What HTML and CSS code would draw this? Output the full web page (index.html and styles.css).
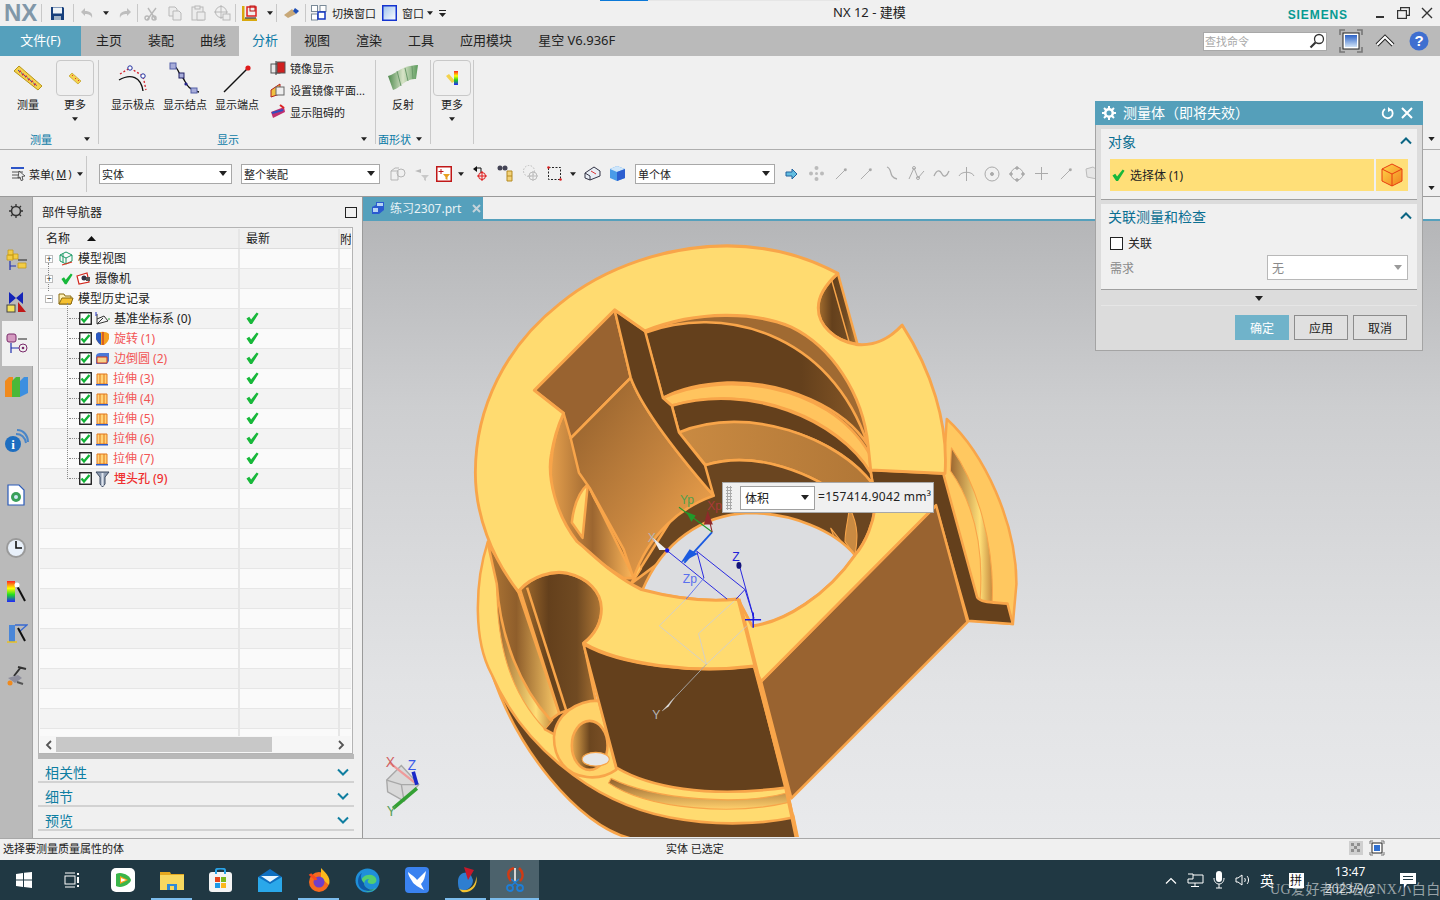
FILE: index.html
```html
<!DOCTYPE html>
<html lang="zh">
<head>
<meta charset="utf-8">
<title>NX 12 - 建模</title>
<link rel="stylesheet" href="styles.css">
</head>
<body>
<svg class="defs" width="0" height="0">
  <defs>
    <symbol id="ok" viewBox="0 0 14 14"><path d="M.5 7 L3.500 5 L5.500 8 L11.500 .5 L13.500 2 L6.500 13 L4.500 13 Z" fill="#17b83a"/></symbol>
    <symbol id="cb" viewBox="0 0 13 13"><rect x=".75" y=".75" width="11.5" height="11.5" fill="#fff" stroke="#111" stroke-width="1.3"/><path d="M2.5 6.5 L5 9.5 L10.5 3" fill="none" stroke="#12b436" stroke-width="2.4"/></symbol>
    <symbol id="ext" viewBox="0 0 14 14"><path d="M2 2 H12 V12 H2Z" fill="#ffd277" stroke="#e2761a"/><path d="M5 2V12M9 2V12" stroke="#e2761a"/><path d="M1 12 H13 V13.5 H1Z" fill="#2f5cc8"/></symbol>
    <symbol id="dn" viewBox="0 0 8 5"><path d="M0 0H8L4 5Z" fill="#222"/></symbol>
    <symbol id="chev" viewBox="0 0 12 8"><path d="M1 1.5 L6 6.5 L11 1.5" fill="none" stroke="#0f7ea0" stroke-width="2"/></symbol>
    <symbol id="chu" viewBox="0 0 12 8"><path d="M1 6.5 L6 1.5 L11 6.5" fill="none" stroke="#0b6583" stroke-width="2"/></symbol>
    <symbol id="ln" viewBox="0 0 16 16"><path d="M2 14 L13 3" stroke="#a9a9a9" fill="none"/><circle cx="12" cy="4" r="1.6" fill="#a9a9a9"/></symbol>
  </defs>
</svg>

<div class="app">
  <header class="titlebar">
    <div class="qat">
      <span class="nx">NX</span><i class="sep"></i>
      <span class="s w31"><svg width="15" height="15" viewBox="0 0 15 15"><path d="M1 1H13L14 2V14H1Z" fill="#173f7c"/><rect x="3" y="1.5" width="9" height="6" fill="#eef3f7"/><rect x="4" y="10" width="7" height="4" fill="#9fb2c6"/></svg></span><i class="sep"></i>
      <span class="s w26"><svg width="14" height="12" viewBox="0 0 14 12"><path d="M1 5 L5 1 V4 C10 4 13 6 12 11 C11 8 9 7 5 7 V9Z" fill="#bdbdbd"/></svg></span>
      <span class="s w12"><svg width="6" height="4"><use href="#dn"/></svg></span>
      <span class="s w25"><svg width="14" height="12" viewBox="0 0 14 12"><path d="M13 5 L9 1 V4 C4 4 1 6 2 11 C3 8 5 7 9 7 V9Z" fill="#bdbdbd"/></svg></span><i class="sep"></i>
      <span class="s w26"><svg width="15" height="15" viewBox="0 0 15 15" fill="none" stroke="#b8b8b8" stroke-width="1.4"><path d="M3 14 L12 2M12 14 L4 2"/><circle cx="3" cy="12" r="2"/><circle cx="10" cy="12" r="2"/></svg></span>
      <span class="s w22"><svg width="14" height="15" viewBox="0 0 14 15" fill="#ececec" stroke="#b8b8b8"><path d="M1 1H7L9 3V10H1Z"/><path d="M5 5H11L13 7V14H5Z"/></svg></span>
      <span class="s w24"><svg width="15" height="16" viewBox="0 0 15 16" fill="#ececec" stroke="#b8b8b8"><rect x="1" y="2" width="11" height="13"/><rect x="4" y="1" width="5" height="3"/><path d="M6 7H14V15H6Z"/></svg></span>
      <span class="s w25"><svg width="17" height="16" viewBox="0 0 17 16" fill="none" stroke="#b8b8b8"><circle cx="7" cy="7" r="5.5"/><path d="M7 0V14M0 7H14"/><rect x="9" y="9" width="7" height="6" fill="#ececec"/></svg></span><i class="sep"></i>
      <span class="s w28"><svg width="16" height="16" viewBox="0 0 16 16"><path d="M1 1 V15 H15" fill="none" stroke="#d9a90e" stroke-width="3"/><rect x="5" y="2" width="9" height="9" fill="none" stroke="#d22" stroke-width="1.5"/><rect x="8" y="1" width="5" height="5" fill="none" stroke="#b11" /><path d="M3 13H14" stroke="#111"/></svg></span>
      <span class="s w12"><svg width="6" height="4"><use href="#dn"/></svg></span><i class="sep"></i>
      <span class="s w28"><svg width="17" height="12" viewBox="0 0 17 12"><path d="M1 8 L9 2 L13 7 L5 11Z" fill="#c8a878"/><path d="M12 1 L16 4 L13 7 L10 4Z" fill="#1f4fb5"/></svg></span><i class="sep"></i>
      <span class="s w26"><svg width="16" height="16" viewBox="0 0 16 16" fill="#fff" stroke="#7a8a98"><rect x=".5" y=".5" width="6" height="6"/><rect x="9" y=".5" width="6" height="6"/><rect x=".5" y="9" width="6" height="6"/><rect x="7" y="7" width="7" height="7" stroke="#1234c0" stroke-width="1.5"/></svg></span>
      <span class="qtext">切换窗口</span>
      <span class="s w26"><svg width="15" height="16" viewBox="0 0 15 16"><defs><linearGradient id="wg" x1="0" y1="0" x2="1" y2="1"><stop offset="0" stop-color="#9cc1ec"/><stop offset="1" stop-color="#fff"/></linearGradient></defs><rect x=".75" y=".75" width="13.5" height="14.5" fill="url(#wg)" stroke="#1434d0" stroke-width="1.5"/></svg></span>
      <span class="qtext">窗口</span>
      <span class="s w12"><svg width="6" height="4"><use href="#dn"/></svg></span>
      <span class="s w12 menu-more"><svg width="7" height="7" viewBox="0 0 7 7"><path d="M0 0.5H7" stroke="#222"/><path d="M0 3H7L3.5 7Z" fill="#222"/></svg></span>
    </div>
    <span class="apptitle">NX 12 - 建模</span>
    <span class="siemens">SIEMENS</span>
    <span class="winbtn"><svg width="9" height="9"><path d="M1 8H9" stroke="#333" stroke-width="2"/></svg></span>
    <span class="winbtn"><svg width="13" height="12" viewBox="0 0 13 12" fill="none" stroke="#333" stroke-width="1.2"><rect x=".6" y="3.6" width="8.8" height="7.8"/><path d="M3.6 3.5V.6H12.4V8.4H9.5"/></svg></span>
    <span class="winbtn"><svg width="12" height="12"><path d="M1 1L11 11M11 1L1 11" stroke="#333" stroke-width="1.4"/></svg></span>
    <i class="progress"></i>
  </header>

  <nav class="tabbar">
    <a class="tab file">文件(F)</a>
    <a class="tab first">主页</a><a class="tab">装配</a><a class="tab">曲线</a><a class="tab active">分析</a><a class="tab">视图</a><a class="tab">渲染</a><a class="tab">工具</a><a class="tab">应用模块</a><a class="tab">星空 V6.936F</a>
    <span class="grow"></span>
    <label class="search"><span>查找命令</span><svg width="16" height="16" viewBox="0 0 16 16" fill="none" stroke="#333" stroke-width="1.3"><circle cx="10" cy="6" r="4.5"/><path d="M6.5 9.5L1.5 14.5" stroke-width="2.2"/></svg></label>
    <span class="tabicon"><svg width="24" height="24" viewBox="0 0 24 24"><defs><linearGradient id="fs" x1="0" y1="0" x2="0" y2="1"><stop offset="0" stop-color="#2c62c6"/><stop offset="1" stop-color="#cfe2f6"/></linearGradient></defs><path d="M1 6V1H6M18 1H23V6M23 18V23H18M6 23H1V18" fill="none" stroke="#777" stroke-width="1.6"/><rect x="4" y="4" width="16" height="16" fill="#fff" stroke="#222"/><rect x="6" y="6" width="12" height="12" fill="url(#fs)"/></svg></span>
    <span class="tabicon"><svg width="20" height="14" viewBox="0 0 20 14"><path d="M2 11L10 3L18 11" fill="none" stroke="#222" stroke-width="4"/><path d="M2 11L10 3L18 11" fill="none" stroke="#fff" stroke-width="2"/></svg></span>
    <span class="tabicon"><svg width="20" height="20" viewBox="0 0 20 20"><circle cx="10" cy="10" r="9.5" fill="#3f6fd0"/><text x="10" y="15" class="help">?</text></svg></span>
  </nav>

  <section class="ribbon">
    <div class="rgroup g1">
      <div class="rbody">
        <div class="ritem w56"><div class="ric"><svg width="30" height="28" viewBox="0 0 30 28"><path d="M1 7L6 2L29 22L25 26Z" fill="#f4d24c" stroke="#b79518"/><path d="M6 8l2-1M9 11l2-1M12 13l2-1M15 16l2-1M18 18l2-1M21 21l2-1" stroke="#d33" stroke-width="1.6"/><path d="M5 6L24 22" stroke="#2545b5" stroke-dasharray="2 2"/></svg></div><span>测量</span></div>
        <div class="ritem w38"><div class="ric boxed"><svg width="14" height="13" viewBox="0 0 14 13"><path d="M1 4L4 1L13 9L10 12Z" fill="#f4d24c" stroke="#b79518" stroke-width=".6"/><path d="M4 4l1-1M7 7l1-1M10 9l1-1" stroke="#d33"/></svg></div><span>更多</span><svg class="car" width="6" height="4"><use href="#dn"/></svg></div>
      </div>
      <div class="rlabel"><span>测量</span><svg class="lcar" width="6" height="4"><use href="#dn"/></svg></div>
    </div>
    <div class="rgroup g2">
      <div class="rbody">
        <div class="ritem w52"><div class="ric"><svg width="32" height="30" viewBox="0 0 32 30" fill="none"><path d="M3 11 L13 5 L26 13 L29 27" stroke="#d5202a" stroke-width="1.3" stroke-dasharray="2 2"/><path d="M2 17 C14 10 24 14 26 28" stroke="#111" stroke-width="1.4"/><circle cx="13" cy="5" r="2.2" fill="#fff" stroke="#2030a0"/><circle cx="26" cy="13" r="2.2" fill="#fff" stroke="#2030a0"/></svg></div><span>显示极点</span></div>
        <div class="ritem w52"><div class="ric"><svg width="32" height="32" viewBox="0 0 32 32" fill="none"><path d="M4 3 C10 6 10 14 14 16 C17 20 18 28 30 30" stroke="#111" stroke-width="1.3"/><rect x="1" y="1" width="6" height="6" fill="#a7acd9" stroke="#5560a8"/><rect x="10" y="11" width="5" height="5" fill="#a7acd9" stroke="#222266"/><rect x="22" y="26" width="6" height="5" fill="#a7acd9" stroke="#5560a8"/><circle cx="17" cy="22" r="1.6" fill="#222288"/></svg></div><span>显示结点</span></div>
        <div class="ritem w52"><div class="ric"><svg width="30" height="30" viewBox="0 0 30 30"><path d="M2 29L26 5" stroke="#111" stroke-width="1.4"/><circle cx="26" cy="5" r="2.6" fill="#e01a1a"/></svg></div><span>显示端点</span></div>
        <ul class="rlist">
          <li><svg width="16" height="16" viewBox="0 0 16 16"><rect x="1" y="4" width="9" height="9" fill="#e8e8e8" stroke="#555"/><rect x="7" y="2" width="8" height="11" fill="#d01f1f" stroke="#555"/><path d="M6 1V15" stroke="#333"/></svg>镜像显示</li>
          <li><svg width="16" height="16" viewBox="0 0 16 16"><path d="M1 8L10 2V12L1 15Z" fill="#f0c040" stroke="#b02020"/><rect x="6" y="5" width="8" height="8" fill="#eee" stroke="#666"/></svg>设置镜像平面...</li>
          <li><svg width="16" height="16" viewBox="0 0 16 16"><path d="M1 8L14 3L15 8L3 14Z" fill="#c03070"/><path d="M2 9L13 6" stroke="#3050c0" stroke-width="2"/><path d="M10 1L14 4" stroke="#d22" stroke-width="2"/></svg>显示阻碍的</li>
        </ul>
      </div>
      <div class="rlabel center"><span>显示</span><svg class="lcar" width="6" height="4"><use href="#dn"/></svg></div>
    </div>
    <div class="rgroup g3">
      <div class="rbody">
        <div class="ritem w54"><div class="ric"><svg width="32" height="28" viewBox="0 0 32 28"><defs><linearGradient id="rf" x1="0" y1="0" x2="1" y2="0"><stop offset="0" stop-color="#4f8a4f"/><stop offset=".5" stop-color="#d8e4c8"/><stop offset="1" stop-color="#5b9a5b"/></linearGradient></defs><path d="M1 12C10 10 12 2 31 1L29 15C18 14 14 24 6 26Z" fill="url(#rf)"/><path d="M10 7L14 22M18 4L21 17M25 2L26 15" stroke="#6a9a6a"/></svg></div><span>反射</span></div>
      </div>
      <div class="rlabel"><span>面形状</span><svg class="lcar" width="6" height="4"><use href="#dn"/></svg></div>
    </div>
    <div class="rgroup g4">
      <div class="rbody">
        <div class="ritem w38"><div class="ric boxed"><svg width="14" height="15" viewBox="0 0 14 15"><defs><linearGradient id="rb" x1="0" y1="0" x2="0" y2="1"><stop offset="0" stop-color="#f22"/><stop offset=".35" stop-color="#ff0"/><stop offset=".65" stop-color="#2c2"/><stop offset="1" stop-color="#22f"/></linearGradient></defs><path d="M1 5L4 3L10 10L7 12Z" fill="#f4d24c"/><rect x="9" y="0" width="4" height="14" fill="url(#rb)"/></svg></div><span>更多</span><svg class="car" width="6" height="4"><use href="#dn"/></svg></div>
      </div>
    </div>
    <svg class="tcar" width="7" height="4"><use href="#dn"/></svg>
  </section>

  <section class="toolbar">
    <span class="menu"><svg width="17" height="15" viewBox="0 0 17 15"><path d="M1 2H14" stroke="#2d55c8" stroke-width="2"/><path d="M2 6H13M2 9H13M2 12H13" stroke="#555"/><path d="M9 5L15 10L12 10.5L13 14L11 14.500L10 11L8 12Z" fill="#eee" stroke="#222" stroke-width=".7"/></svg>菜单(<u>M</u>)<svg class="mcar" width="6" height="4"><use href="#dn"/></svg></span>
    <i class="tsep"></i>
    <span class="sel w133"><span>实体</span><svg width="8" height="5"><use href="#dn"/></svg></span>
    <span class="sel w139"><span>整个装配</span><svg width="8" height="5"><use href="#dn"/></svg></span>
    <span class="ti t25"><svg width="17" height="16" viewBox="0 0 17 16" fill="none" stroke="#b5b5b5"><path d="M2 5V14H9V5ZM2 5L6 2H10"/><circle cx="12" cy="7" r="4"/></svg></span>
    <span class="ti t23"><svg width="17" height="15" viewBox="0 0 17 15"><path d="M2 5L8 3V7Z" fill="#b9b9b9"/><path d="M8 9H16L13 12V15L11 14V12Z" fill="#c9c9c9"/></svg></span>
    <span class="ti t22"><svg width="16" height="16" viewBox="0 0 16 16"><rect x=".75" y=".75" width="14.500" height="14.500" fill="#fff" stroke="#c01818" stroke-width="1.5"/><path d="M5 3V8M2.500 5.500H7.500" stroke="#c01818"/><path d="M7 8H14L11.500 11V14L9.500 13V11Z" fill="#e8a020"/></svg></span>
    <span class="ti t12"><svg width="6" height="4"><use href="#dn"/></svg></span>
    <span class="ti t26"><svg width="17" height="17" viewBox="0 0 17 17"><path d="M1 4L5 1V7Z" fill="#111"/><path d="M5 3H9V8" fill="none" stroke="#111"/><circle cx="10" cy="11" r="3.500" fill="none" stroke="#e01818"/><path d="M10 6V16M5 11H15" stroke="#e01818"/></svg></span>
    <span class="ti t25"><svg width="17" height="17" viewBox="0 0 17 17"><circle cx="3" cy="3" r="2.500" fill="#445"/><circle cx="8" cy="3" r="2.500" fill="#445"/><path d="M10 6H15V16H10Z" fill="#f2d27a" stroke="#b58a20"/><path d="M10 11H15" stroke="#b58a20"/></svg></span>
    <span class="ti t25"><svg width="17" height="17" viewBox="0 0 17 17" fill="none" stroke="#bbb"><circle cx="7" cy="6" r="5.500" stroke-dasharray="1.500 1.500"/><circle cx="11" cy="11" r="4"/><path d="M11 6V16M6 11H16"/></svg></span>
    <span class="ti t23"><svg width="15" height="15" viewBox="0 0 15 15"><rect x="1.500" y="1.500" width="12" height="12" fill="none" stroke="#222" stroke-dasharray="2 1.500"/><circle cx="1.500" cy="1.500" r="1.300" fill="#d22"/><circle cx="13.500" cy="13.500" r="1.300" fill="#d22"/></svg></span>
    <span class="ti t14"><svg width="6" height="4"><use href="#dn"/></svg></span>
    <span class="ti t25"><svg width="17" height="15" viewBox="0 0 17 15"><path d="M1 7L10 1L16 5V10L6 14L1 12Z" fill="#e9eef5" stroke="#334"/><path d="M7 5L12 8" stroke="#d33"/><path d="M1 7L6 10V14" fill="none" stroke="#334"/></svg></span>
    <span class="ti t25"><svg width="17" height="17" viewBox="0 0 17 17"><path d="M1 4L8 1L16 4V13L8 16L1 13Z" fill="#4a9be8"/><path d="M1 4L8 7L16 4L8 1Z" fill="#cfe6fa"/><path d="M8 7L16 4V13L8 16Z" fill="#2d5fd0"/></svg></span>
    <span class="sel w140 ml5"><span>单个体</span><svg width="8" height="5"><use href="#dn"/></svg></span>
    <span class="ti t25 ml4"><svg width="13" height="12" viewBox="0 0 13 12"><path d="M1 4H7V1L12 6L7 11V8H1Z" fill="#63bde0" stroke="#21639e"/></svg></span>
    <span class="ti t25"><svg width="17" height="17" viewBox="0 0 17 17" fill="#bbb"><circle cx="8.500" cy="3" r="2"/><circle cx="8.500" cy="14" r="2"/><circle cx="3" cy="8.500" r="2"/><circle cx="14" cy="8.500" r="2"/><circle cx="8.500" cy="8.500" r="1.500"/></svg></span>
    <span class="ti t25"><svg width="15" height="15"><use href="#ln"/></svg></span>
    <span class="ti t25"><svg width="15" height="15"><use href="#ln"/></svg></span>
    <span class="ti t25"><svg width="14" height="15" viewBox="0 0 14 15"><path d="M2 1C8 3 3 11 12 13" fill="none" stroke="#aaa" stroke-width="1.300"/></svg></span>
    <span class="ti t25"><svg width="17" height="15" viewBox="0 0 17 15" fill="none" stroke="#aaa"><path d="M1 13L6 2L10 12L16 5"/><circle cx="6" cy="2" r="1.500"/><circle cx="10" cy="12" r="1.500"/></svg></span>
    <span class="ti t25"><svg width="17" height="10" viewBox="0 0 17 10"><path d="M1 7C4 0 7 1 9 5C11 9 14 7 16 2" fill="none" stroke="#aaa" stroke-width="1.300"/></svg></span>
    <span class="ti t25"><svg width="17" height="15" viewBox="0 0 17 15" fill="none" stroke="#aaa"><path d="M8.500 1V15M1 10C3 5 14 5 16 10"/></svg></span>
    <span class="ti t25"><svg width="16" height="16" viewBox="0 0 16 16" fill="none" stroke="#aaa"><circle cx="8" cy="8" r="7"/><circle cx="8" cy="8" r="1.500" fill="#aaa"/></svg></span>
    <span class="ti t25"><svg width="16" height="16" viewBox="0 0 16 16" fill="none" stroke="#aaa"><circle cx="8" cy="8" r="6"/><circle cx="8" cy="2" r="1.300" fill="#aaa"/><circle cx="2" cy="8" r="1.300" fill="#aaa"/><circle cx="14" cy="8" r="1.300" fill="#aaa"/><circle cx="8" cy="14" r="1.300" fill="#aaa"/></svg></span>
    <span class="ti t25"><svg width="13" height="13"><path d="M6.500 0V13M0 6.500H13" stroke="#aaa"/></svg></span>
    <span class="ti t25"><svg width="15" height="15"><use href="#ln"/></svg></span>
    <span class="ti t25"><svg width="16" height="15" viewBox="0 0 16 15"><path d="M2 3L9 1L15 5L13 13L3 11Z" fill="#e6e6e6" stroke="#bbb"/></svg></span>
    <svg class="tcar2" width="7" height="4"><use href="#dn"/></svg>
  </section>

  <main class="workspace">
    <aside class="rail">
      <div class="ra gear"><svg width="14" height="14" viewBox="0 0 14 14"><circle cx="7" cy="7" r="4.500" fill="none" stroke="#333" stroke-width="1.600"/><path d="M7 0V3M7 11V14M0 7H3M11 7H14M2 2L4 4M10 10L12 12M12 2L10 4M4 10L2 12" stroke="#333" stroke-width="1.300"/></svg></div>
      <div class="ra"><svg width="23" height="23" viewBox="0 0 23 23"><path d="M3 1H8V6H3ZM8 5H13V10H8ZM2 6H8V11H2Z" fill="#f2cc46" stroke="#c79c17" stroke-width=".8"/><path d="M5 12V21M5 17H11" stroke="#2030b0" stroke-width="1.200"/><path d="M13 14H21V19H13Z" fill="#f2cc46" stroke="#c79c17" stroke-width=".8"/><path d="M13 11H22" stroke="#222"/></svg></div>
      <div class="ra"><svg width="21" height="22" viewBox="0 0 21 22"><path d="M3 1L10 7L17 1V13L10 7L3 13Z" fill="#1424b8"/><rect x="1" y="14" width="8" height="7" fill="#f5e25a" stroke="#444"/><path d="M12 21V11L20 21Z" fill="#c01818"/></svg></div>
      <div class="ra on"><svg width="23" height="23" viewBox="0 0 23 23"><rect x="1" y="2" width="9" height="8" rx="2" fill="#d49ac0" stroke="#7a2a6a"/><path d="M12 7H21" stroke="#222"/><path d="M5 11V21M5 16H13" stroke="#2030b0" stroke-width="1.200"/><circle cx="17" cy="16" r="4" fill="none" stroke="#7a2a6a"/><circle cx="17" cy="16" r="1.300" fill="#7a2a6a"/></svg></div>
      <div class="ra"><svg width="25" height="22" viewBox="0 0 25 22"><path d="M1 5L5 1H9V21H1Z" fill="#f08a1d"/><path d="M8 5L12 1H16V21H8Z" fill="#4ab838"/><path d="M16 5L20 1H24V17L16 21Z" fill="#3c8fe0"/></svg></div>
      <div class="ra big first"><svg width="25" height="25" viewBox="0 0 25 25"><path d="M12 5C18 5 21 9 22 14M13 1C20 1 24 7 24 13" fill="none" stroke="#4a86c8" stroke-width="2"/><circle cx="9" cy="15" r="8" fill="#1e6ec0"/><text x="9" y="20" class="info">i</text></svg></div>
      <div class="ra big"><svg width="18" height="22" viewBox="0 0 18 22"><path d="M1 1H12L17 6V21H1Z" fill="#fff" stroke="#2a5ab8" stroke-width="1.200"/><circle cx="9" cy="13" r="5" fill="#3aa05a"/><circle cx="9" cy="13" r="2" fill="#cfe8f6"/></svg></div>
      <div class="ra big"><svg width="22" height="22" viewBox="0 0 22 22"><circle cx="11" cy="11" r="10" fill="#9a9a9a"/><circle cx="11" cy="11" r="8" fill="#e8f0fa"/><path d="M11 4V11H17" fill="none" stroke="#111" stroke-width="1.600"/></svg></div>
      <div class="ra tight"><svg width="21" height="23" viewBox="0 0 21 23"><defs><linearGradient id="cr" x1="0" y1="0" x2="0" y2="1"><stop offset="0" stop-color="#f22"/><stop offset=".35" stop-color="#ff0"/><stop offset=".65" stop-color="#2d2"/><stop offset="1" stop-color="#22f"/></linearGradient></defs><rect x="1" y="1" width="8" height="21" fill="url(#cr)"/><path d="M11 6L19 21" stroke="#111" stroke-width="2"/><circle cx="11" cy="5" r="2.500" fill="#fff"/></svg></div>
      <div class="ra"><svg width="23" height="22" viewBox="0 0 23 22"><path d="M4 3H10V20H4Z" fill="#4a86d8"/><path d="M10 3H22L14 10" fill="none" stroke="#3a6ad0" stroke-width="1.300"/><path d="M13 6L20 19" stroke="#111" stroke-width="2"/><path d="M2 20H12" stroke="#e8c020" stroke-width="1.500"/></svg></div>
      <div class="ra"><svg width="21" height="22" viewBox="0 0 21 22"><path d="M12 3L20 5M15 3L8 12" stroke="#333" stroke-width="2" fill="none"/><path d="M2 14L12 11L16 14L9 19Z" fill="#8f8f9e"/><circle cx="4" cy="19" r="2.500" fill="#f08a1d"/><path d="M11 18L17 20" stroke="#555" stroke-width="2"/></svg></div>
    </aside>

    <section class="nav">
      <div class="navhead"><span>部件导航器</span><i class="maxbox"></i></div>
      <div class="tree">
        <div class="thead"><div class="c1">名称<svg width="9" height="5" viewBox="0 0 9 5"><path d="M0 5L4.500 0L9 5Z" fill="#111"/></svg></div><div class="c2">最新</div><div class="c3">附</div></div>
        <div class="tbody">
          <div class="row"><div class="c1"><i class="exp">+</i><svg class="ic1" width="16" height="15" viewBox="0 0 16 15" fill="none" stroke="#1a9a66"><path d="M8 1L14 4V10L8 13L2 10V4Z"/><path d="M2 4L8 7L14 4M8 7V13M5 2.500V11.500"/><path d="M4 14L14 11" stroke="#e0301e" stroke-width="1.200"/></svg><span class="t">模型视图</span></div><div class="c2"></div><div class="c3"></div></div>
          <div class="row"><div class="c1"><i class="exp">+</i><svg class="okr" width="12" height="12"><use href="#ok"/></svg><svg class="ic2" width="15" height="13" viewBox="0 0 15 13"><path d="M1 4L11 1L13 10L3 12Z" fill="#fff" stroke="#d2281e" stroke-width="1.200"/><circle cx="8" cy="6" r="2.500" fill="#334"/><rect x="10" y="5" width="4" height="4" fill="#555"/></svg><span class="t">摄像机</span></div><div class="c2"></div><div class="c3"></div></div>
          <div class="row"><div class="c1"><i class="exp">−</i><svg class="ic1" width="16" height="12" viewBox="0 0 16 12"><path d="M1 1H6L7 3H13V11H1Z" fill="#fff2b8" stroke="#8a6a10"/><path d="M1 11L4 5H15L13 11Z" fill="#f5c030" stroke="#8a6a10"/></svg><span class="t">模型历史记录</span></div><div class="c2"></div><div class="c3"></div></div>

          <div class="row"><div class="c1 ch"><i class="dots"></i><svg width="13" height="13"><use href="#cb"/></svg><svg class="ci" width="15" height="15" viewBox="0 0 15 15" fill="none" stroke="#333"><path d="M2 3V13L13 10L9 5L2 8M2 13L8 7"/><path d="M1 1V5" stroke="#2030c0"/><path d="M13 8H15" stroke="#20a030"/></svg><span class="t">基准坐标系 (0)</span></div><div class="c2"><svg width="13" height="13"><use href="#ok"/></svg></div><div class="c3"></div></div>
          <div class="row"><div class="c1 ch"><i class="dots"></i><svg width="13" height="13"><use href="#cb"/></svg><svg class="ci" width="15" height="15" viewBox="0 0 15 15"><path d="M1 3C4 0 11 0 14 3V8C12 12 10 14 8 14H6C4 13 2 10 1 8Z" fill="#f4a020"/><path d="M1 3C2 1 5 1 6 2V14C4 13 2 10 1 8Z" fill="#2a58c0"/><path d="M8 1V14" stroke="#c02020"/></svg><span class="t red">旋转 (1)</span></div><div class="c2"><svg width="13" height="13"><use href="#ok"/></svg></div><div class="c3"></div></div>
          <div class="row"><div class="c1 ch"><i class="dots"></i><svg width="13" height="13"><use href="#cb"/></svg><svg class="ci" width="15" height="13" viewBox="0 0 15 13"><path d="M1 4C1 2 3 1 5 1H14V9L12 12H1Z" fill="#4a78d8"/><path d="M2 5H12V11H2Z" fill="#f5d28a" stroke="#d2341e"/></svg><span class="t red">边倒圆 (2)</span></div><div class="c2"><svg width="13" height="13"><use href="#ok"/></svg></div><div class="c3"></div></div>
          <div class="row"><div class="c1 ch"><i class="dots"></i><svg width="13" height="13"><use href="#cb"/></svg><svg class="ci" width="14" height="14"><use href="#ext"/></svg><span class="t red">拉伸 (3)</span></div><div class="c2"><svg width="13" height="13"><use href="#ok"/></svg></div><div class="c3"></div></div>
          <div class="row"><div class="c1 ch"><i class="dots"></i><svg width="13" height="13"><use href="#cb"/></svg><svg class="ci" width="14" height="14"><use href="#ext"/></svg><span class="t red">拉伸 (4)</span></div><div class="c2"><svg width="13" height="13"><use href="#ok"/></svg></div><div class="c3"></div></div>
          <div class="row"><div class="c1 ch"><i class="dots"></i><svg width="13" height="13"><use href="#cb"/></svg><svg class="ci" width="14" height="14"><use href="#ext"/></svg><span class="t red">拉伸 (5)</span></div><div class="c2"><svg width="13" height="13"><use href="#ok"/></svg></div><div class="c3"></div></div>
          <div class="row"><div class="c1 ch"><i class="dots"></i><svg width="13" height="13"><use href="#cb"/></svg><svg class="ci" width="14" height="14"><use href="#ext"/></svg><span class="t red">拉伸 (6)</span></div><div class="c2"><svg width="13" height="13"><use href="#ok"/></svg></div><div class="c3"></div></div>
          <div class="row"><div class="c1 ch"><i class="dots"></i><svg width="13" height="13"><use href="#cb"/></svg><svg class="ci" width="14" height="14"><use href="#ext"/></svg><span class="t red">拉伸 (7)</span></div><div class="c2"><svg width="13" height="13"><use href="#ok"/></svg></div><div class="c3"></div></div>
          <div class="row"><div class="c1 ch"><i class="dots"></i><svg width="13" height="13"><use href="#cb"/></svg><svg class="ci" width="15" height="16" viewBox="0 0 15 16"><path d="M1 1H14L10 6V13L7.500 16L5 13V6Z" fill="#8f9db2" stroke="#3d4a60"/><path d="M7.500 2V15" stroke="#dfe5ee" stroke-width="2"/></svg><span class="t red strong">埋头孔 (9)</span></div><div class="c2"><svg width="13" height="13"><use href="#ok"/></svg></div><div class="c3"></div></div>

          <div class="row"><div class="c1"></div><div class="c2"></div><div class="c3"></div></div>
          <div class="row"><div class="c1"></div><div class="c2"></div><div class="c3"></div></div>
          <div class="row"><div class="c1"></div><div class="c2"></div><div class="c3"></div></div>
          <div class="row"><div class="c1"></div><div class="c2"></div><div class="c3"></div></div>
          <div class="row"><div class="c1"></div><div class="c2"></div><div class="c3"></div></div>
          <div class="row"><div class="c1"></div><div class="c2"></div><div class="c3"></div></div>
          <div class="row"><div class="c1"></div><div class="c2"></div><div class="c3"></div></div>
          <div class="row"><div class="c1"></div><div class="c2"></div><div class="c3"></div></div>
          <div class="row"><div class="c1"></div><div class="c2"></div><div class="c3"></div></div>
          <div class="row"><div class="c1"></div><div class="c2"></div><div class="c3"></div></div>
          <div class="row"><div class="c1"></div><div class="c2"></div><div class="c3"></div></div>
          <div class="row"><div class="c1"></div><div class="c2"></div><div class="c3"></div></div>
          <div class="row"><div class="c1"></div><div class="c2"></div><div class="c3"></div></div>
          <i class="vdot vd1"></i><i class="vdot vd2"></i>
        </div>
        <div class="hscroll"><svg width="7" height="10" viewBox="0 0 7 10"><path d="M6 1L2 5L6 9" fill="none" stroke="#555" stroke-width="1.800"/></svg><i class="thumb"></i><svg width="7" height="10" viewBox="0 0 7 10"><path d="M1 1L5 5L1 9" fill="none" stroke="#555" stroke-width="1.800"/></svg></div>
      </div>
      <i class="splitter"></i>
      <div class="acc"><span>相关性</span><svg width="12" height="8"><use href="#chev"/></svg></div>
      <div class="acc"><span>细节</span><svg width="12" height="8"><use href="#chev"/></svg></div>
      <div class="acc"><span>预览</span><svg width="12" height="8"><use href="#chev"/></svg></div>
    </section>

    <section class="view">
      <div class="viewtabs">
        <div class="vtab"><svg width="14" height="14" viewBox="0 0 14 14"><path d="M1 6L5 4V1L13 1V9L8 13L1 13Z" fill="#2a5ad0"/><path d="M6 2H12V5H6ZM2 7H7V11H2Z" fill="#b6d4f4"/></svg><span>练习2307.prt</span><svg class="vx" width="9" height="9"><path d="M1 1L8 8M8 1L1 8" stroke="#c4d3da" stroke-width="2"/></svg></div>
      </div>
      <div class="canvas">
        <svg class="model" viewBox="-299.600 -47 3015.600 1608" preserveAspectRatio="none">
          <defs>
            <linearGradient id="panel" x1="0" y1="0" x2="1" y2="1"><stop offset="0" stop-color="#8f5d2b"/><stop offset=".55" stop-color="#c6853f"/><stop offset="1" stop-color="#ffae52"/></linearGradient>
            <linearGradient id="notch" x1="0" y1="0" x2="1" y2="0"><stop offset="0" stop-color="#a8702f"/><stop offset=".35" stop-color="#64401c"/><stop offset=".7" stop-color="#704a22"/><stop offset="1" stop-color="#b07836"/></linearGradient>
            <linearGradient id="col" x1="0" y1="0" x2="1" y2="0"><stop offset="0" stop-color="#b17836"/><stop offset=".4" stop-color="#8f5e2b"/><stop offset="1" stop-color="#ffce6a"/></linearGradient>
            <linearGradient id="cyl" x1="0" y1="0" x2="1" y2="0"><stop offset="0" stop-color="#64401c"/><stop offset=".7" stop-color="#64401c"/><stop offset="1" stop-color="#8a5a28"/></linearGradient>
            <linearGradient id="ring" x1="0" y1="0" x2="1" y2="0"><stop offset="0" stop-color="#c98a42"/><stop offset="1" stop-color="#b07636"/></linearGradient>
            <linearGradient id="wallL" x1="0" y1="0" x2="1" y2="0"><stop offset="0" stop-color="#e59f4c"/><stop offset=".5" stop-color="#9c6630"/><stop offset="1" stop-color="#ffb85a"/></linearGradient>
            <linearGradient id="cs" x1="0" y1="0" x2="1" y2="0"><stop offset="0" stop-color="#e6a94e"/><stop offset=".5" stop-color="#6c461f"/><stop offset="1" stop-color="#7a5026"/></linearGradient>
            <linearGradient id="flg" x1="0" y1="0" x2="1" y2="0"><stop offset="0" stop-color="#9c6630"/><stop offset=".7" stop-color="#ffdf78"/><stop offset="1" stop-color="#c68a3e"/></linearGradient>
            <linearGradient id="gvb" x1="0" y1="0" x2="0" y2="1"><stop offset="0" stop-color="#8f5d2b"/><stop offset="1" stop-color="#ffd06c"/></linearGradient>
          </defs>
          <g stroke="#f8a54a" stroke-width="7" stroke-linejoin="round">
            <!-- rear flange, right -->
            <path d="M1335,470 C1440,560 1530,740 1530,900 L1520,1005 L1395,995 L1325,612 Z" fill="#ffc860"/>
            <path d="M1348,545 C1420,640 1470,800 1462,948 L1428,945 C1440,800 1410,690 1345,605 Z" fill="url(#flg)" stroke-width="3"/>
            <path d="M1325,612 L1420,935 C1430,950 1470,948 1505,952 L1520,1005 L1395,997 L1305,700 L1135,692 L1122,603 Z" fill="#64401c"/>
            <!-- right side face -->
            <path d="M1305,695 L1393,1000 L900,1460 L815,1155 Z" fill="#996330"/>
            <!-- lower flange -->
            <path d="M60,1130 C130,1330 300,1530 450,1565 L480,1640 L935,1640 L905,1505 Z" fill="#6a4520"/>
            <path d="M50,790 C12,900 10,1050 60,1135 C140,1310 330,1470 560,1510 C700,1535 830,1525 905,1510 L885,1430 L410,1380 L210,1280 L135,920 Z" fill="#ffdb70"/>
            <path d="M395,1408 C520,1465 760,1480 892,1445 L895,1470 C740,1505 500,1490 388,1420 Z" fill="url(#gvb)" stroke-width="3"/>
            <path d="M75,900 C75,1060 110,1180 210,1280 L232,1255 C150,1170 100,1060 90,960 Z" fill="url(#flg)" stroke-width="3"/>
            <!-- left column -->
            <path d="M50,795 L135,920 L250,1238 L225,1255 C140,1170 85,1040 75,900 Z" fill="url(#col)"/>
            <path d="M140,915 C175,880 230,865 270,872 C330,885 368,920 368,965 C368,1005 345,1035 318,1055 L352,1205 L250,1238 Z" fill="url(#notch)"/>
            <path d="M160,910 L270,1232" fill="none"/>
            <!-- countersink -->
            <path d="M235,1300 C240,1240 300,1205 360,1205 L410,1385 C360,1418 290,1408 260,1372 C240,1350 235,1325 235,1300 Z" fill="#ffd36a"/>
            <ellipse cx="335" cy="1322" rx="50" ry="64" fill="url(#cs)"/>
            <ellipse cx="352" cy="1358" rx="38" ry="18" fill="#e6e7e9" stroke-width="3"/>
            <!-- front face -->
            <path d="M318,1058 C420,1112 620,1135 795,1115 L885,1432 C660,1460 500,1430 410,1380 Z" fill="#64401c"/>
            <!-- notch right -->
            <path d="M1030,90 C1000,115 975,145 975,180 C975,225 1020,265 1085,275 Z" fill="url(#notch)"/>
            <path d="M1012,105 L1062,270" fill="none" stroke-width="4"/>
            <!-- bore -->
            <path d="M490,240 C640,185 800,190 900,230 C1010,280 1100,400 1115,540 L1122,603 L1135,695 C1130,740 1110,790 1078,825 C1000,930 880,1000 790,1010 L750,940 C650,950 560,935 480,915 C400,880 340,820 300,790 C240,720 215,620 228,560 C235,520 245,490 262,455 L405,185 Z" fill="#a06a32" stroke="none"/>
            <path d="M490,245 C700,170 1010,240 1115,540 C1050,440 880,370 720,375 C650,378 590,390 540,415 Z" fill="url(#cyl)"/>
            <path d="M540,415 C700,345 1000,370 1118,560 L1122,610 C1030,470 800,375 565,435 Z" fill="#ffc45e"/>
            <path d="M565,435 C780,375 1030,470 1122,610 L1128,640 C1040,530 830,440 585,505 Z" fill="#64401c"/>
            <path d="M585,505 C780,430 1030,520 1128,640 L1135,695 L1070,690 C960,610 800,550 660,590 Z" fill="url(#ring)"/>
            <path d="M660,590 C800,550 960,610 1070,690 L1135,695 C1130,740 1110,790 1078,825 L1000,900 L680,740 L450,900 Z" fill="#6a4520"/>
            <path d="M1010,755 L1040,790 L1062,815 L1020,780 Z" fill="#a06a32" stroke-width="3"/>
            <path d="M1062,700 C1090,750 1085,790 1078,825 L1050,790 C1050,760 1060,730 1062,700 Z" fill="#c98a42" stroke-width="3"/>
            <path d="M482,918 C540,790 650,720 780,715 C900,715 1020,760 1078,825 C1000,930 880,1000 790,1012 L750,940 C650,950 560,935 482,918 Z" fill="#dcdde0"/>
            <!-- keyway -->
            <path d="M262,455 C225,530 210,640 250,740 L300,805 L430,885 L460,885 L335,650 Z" fill="url(#wallL)"/>
            <path d="M285,740 C290,700 305,660 330,640 L315,780 Z" fill="#ffdb70"/>
            <path d="M335,650 L430,810 L460,890 L480,860 C420,770 350,700 335,650 Z" fill="#ffc45e" stroke-width="4"/>
            <path d="M405,185 L180,395 L262,455 L282,520 L450,362 Z" fill="#996330"/>
            <path d="M282,520 L450,362 C480,440 580,560 682,670 C590,700 500,770 458,885 L430,810 L335,650 L305,610 Z" fill="url(#panel)"/>
            <path d="M405,185 L490,240 L540,415 L565,435 L585,505 L658,590 L682,670 C580,560 480,440 450,362 Z" fill="#64401c"/>
            <!-- top face -->
            <path d="M1030,90 C930,40 820,18 720,18 C560,18 380,70 250,170 C100,280 15,440 15,610 C15,720 60,830 135,920 L140,915 C175,880 230,865 270,872 C330,885 368,920 368,965 C368,1005 345,1035 318,1055 C420,1110 620,1135 795,1115 L815,1155 L1300,700 L1135,695 C1130,740 1110,790 1078,825 C1000,930 880,1000 790,1010 L750,940 C650,950 560,935 480,915 C400,880 340,820 300,790 C240,720 215,620 228,560 C235,520 245,490 262,455 L180,395 L405,185 L490,240 C640,185 800,190 900,230 C1010,280 1100,400 1115,540 L1122,603 L1330,612 C1340,480 1290,340 1210,225 C1170,265 1130,280 1080,275 C1020,265 975,225 975,180 C975,145 1000,115 1030,90 Z" fill="#ffdb70" stroke-width="8"/>
            <path d="M752,940 L885,1432 L925,1610" fill="none" stroke-width="11"/>
          </g>
          <!-- work coordinate system -->
          <g fill="none" stroke="#c8cde0" stroke-width="2">
            <path d="M605,940 L530,1010 L662,1110 L775,1010 M740,945 L640,1030 L662,1110"/>
          </g>
          <g fill="none" stroke="#1a1ae0" stroke-width="2.500">
            <path d="M550,812 L720,940 M635,815 L770,915 L795,990 M635,815 L655,885 M755,855 L795,990 M770,915 L745,940"/>
            <path d="M678,765 L600,845" stroke="#1a5ae0" stroke-width="5"/>
            <path d="M770,994 H815 M793,975 V1015" stroke-width="4"/>
          </g>
          <path d="M655,885 L605,940" stroke="#5a70ee" fill="none" stroke-width="2.500"/>
          <path d="M662,1110 L560,1210" stroke="#a6a6a6" fill="none" stroke-width="2.500"/>
          <path d="M590,845 L615,810 L638,822 Z" fill="#1a5ae0"/>
          <path d="M585,700 L678,765" stroke="#209a2a" stroke-width="3" fill="none"/>
          <path d="M605,712 L632,722 L620,738 Z" fill="#209a2a"/>
          <path d="M678,765 L665,712" stroke="#8f2a2a" stroke-width="3" fill="none"/>
          <path d="M665,710 L680,745 L655,745 Z" fill="#8f2a2a"/>
          <path d="M510,778 L552,812 L530,812 Z" fill="#eee"/>
          <circle cx="552" cy="813" r="6" fill="#1a1ae0"/>
          <ellipse cx="753" cy="852" rx="7" ry="9" fill="#14147a"/>
          <path d="M572,1198 L538,1232 L556,1220 Z" fill="#f4f4f4" stroke="#bbb"/>
          <text x="588" y="692" class="m yp">Yp</text>
          <text x="664" y="708" class="m xp">Xp</text>
          <text x="596" y="897" class="m zp">Zp</text>
          <text x="734" y="840" class="m z">Z</text>
          <text x="498" y="792" class="m gx">X</text>
          <text x="510" y="1253" class="m gx">Y</text>
        </svg>
        <div class="measure">
          <i class="grip"></i>
          <span class="msel"><span>体积</span><svg width="8" height="5"><use href="#dn"/></svg></span>
          <span class="mval">=157414.9042 mm³</span>
        </div>
        <svg class="triad" width="64" height="70" viewBox="0 0 70 75">
          <path d="M15 31L31 15L50 36L34 54L16 44Z" fill="#d9d9d9" stroke="#a8a8a8" stroke-width="1.500"/>
          <path d="M15 31L31 36L50 36M31 36L34 54" fill="none" stroke="#a8a8a8" stroke-width="1.500"/>
          <path d="M18 12L46 34" stroke="#ef9a9a" stroke-width="2.500"/>
          <path d="M44 22L48 36" stroke="#1a28c8" stroke-width="4"/>
          <path d="M48 40L22 62" stroke="#34a034" stroke-width="4"/>
          <text x="14" y="17" class="tx rx">X</text>
          <text x="38" y="20" class="tx bx">Z</text>
          <text x="15" y="70" class="tx gx2">Y</text>
        </svg>
      </div>
    </section>
  </main>

  <footer class="status">
    <span class="st-left">选择要测量质量属性的体</span>
    <span class="st-mid">实体 已选定</span>
    <span class="st-ic flag"><svg width="14" height="14" viewBox="0 0 14 14"><path d="M0 0H14V14H0Z" fill="#cfcfcf"/><path d="M2 2H5V5H2ZM8 2H11V5H8ZM5 5H8V8H5ZM2 8H5V11H2ZM8 8H11V11H8Z" fill="#8f8f8f"/></svg></span>
    <span class="st-ic"><svg width="16" height="16" viewBox="0 0 16 16"><path d="M1 4V1H4M12 1H15V4M15 12V15H12M4 15H1V12" fill="none" stroke="#777"/><rect x="3" y="3" width="10" height="10" fill="#fff" stroke="#222"/><rect x="5" y="5" width="6" height="6" fill="#2f6fd0"/></svg></span>
  </footer>

  <div class="taskbar">
    <span class="tk w48"><svg width="16" height="16" viewBox="0 0 16 16" fill="#fff"><path d="M0 2L7 1V7.500H0ZM8 .8L16 0V7.500H8ZM0 8.500H7V15L0 14ZM8 8.500H16V16L8 15Z"/></svg></span>
    <span class="tk w48"><svg width="16" height="16" viewBox="0 0 16 16" fill="none" stroke="#fff"><rect x="1" y="4" width="10" height="8"/><path d="M1 1H11M1 15H11"/><path d="M14 1V3M14 5V11M14 13V15" stroke-width="2"/></svg></span>
    <span class="tk w49 third"><svg width="24" height="24" viewBox="0 0 24 24"><rect width="24" height="24" rx="5" fill="#fff"/><path d="M5 6C11 3 19 8 20 12C19 16 11 21 5 18Z" fill="#3ab54a"/><path d="M9 8L17 12L9 16Z" fill="#f9a11b"/><path d="M10 10L15 12L10 14Z" fill="#fff"/></svg></span>
    <span class="tk w49 run"><svg width="24" height="20" viewBox="0 0 24 20"><path d="M0 2H10L11 4H24V20H0Z" fill="#e5a81f"/><path d="M0 5H24V20H0Z" fill="#f8d860"/><path d="M7 14H17V20H7Z" fill="#2f8ad8"/><path d="M10 16H14V20H10Z" fill="#f8d860"/></svg></span>
    <span class="tk w49"><svg width="23" height="24" viewBox="0 0 23 24"><rect y="4" width="23" height="20" rx="3" fill="#f4f4f4"/><path d="M7 6V2C7 0 16 0 16 2V6" fill="none" stroke="#2aa4e8" stroke-width="2"/><rect x="6" y="9" width="5" height="5" fill="#e8451c"/><rect x="12" y="9" width="5" height="5" fill="#7cb91c"/><rect x="6" y="15" width="5" height="5" fill="#1c9ae8"/><rect x="12" y="15" width="5" height="5" fill="#fcb81c"/></svg></span>
    <span class="tk w49"><svg width="24" height="23" viewBox="0 0 24 23"><path d="M12 0L24 8V23H0V8Z" fill="#0f6fc0"/><path d="M0 8L12 15L24 8V23H0Z" fill="#2aa8ea"/><path d="M3 7H21L12 13Z" fill="#e8f6ff"/></svg></span>
    <span class="tk w49 run"><svg width="24" height="24" viewBox="0 0 24 24"><circle cx="12" cy="14" r="10" fill="#f66a1e"/><path d="M14 0C20 6 24 10 22 17L14 10Z" fill="#fcb81c"/><circle cx="12" cy="14" r="5.500" fill="#6f3fc8"/><path d="M3 6C5 9 8 9 9 12" stroke="#fc4a1e" stroke-width="3" fill="none"/></svg></span>
    <span class="tk w49"><svg width="25" height="25" viewBox="0 0 25 25"><circle cx="12.500" cy="12.500" r="12" fill="#1f8fd8"/><path d="M6 14C6 8 14 5 19 8C23 11 22 16 17 16C12 16 12 13 14 11C10 11 8 15 10 18C12 22 18 22 21 20C18 25 6 26 6 14Z" fill="#54cf6f"/><path d="M9 15C9 19 14 23 20 21C14 25 3 23 3 13C3 9 5 6 7 5C5 8 6 12 9 15Z" fill="#0e5aa8"/></svg></span>
    <span class="tk w49"><svg width="24" height="26" viewBox="0 0 24 26"><rect width="24" height="26" rx="4" fill="#3a82f0"/><path d="M3 5C8 9 11 11 12 13L21 4C20 10 19 14 16 17L19 23C14 20 9 18 7 14C5 11 3 8 3 5Z" fill="#fff"/></svg></span>
    <span class="tk w49 run"><svg width="24" height="27" viewBox="0 0 24 27"><path d="M4 14C4 7 10 4 16 6L19 13C19 20 12 25 6 23C4 21 4 17 4 14Z" fill="#2e7ed0"/><path d="M10 0L20 3L14 13Z" fill="#c8182a"/><path d="M5 22C14 26 23 18 22 9C25 17 18 27 8 25Z" fill="#f2c230"/></svg></span>
    <span class="tk w49 act"><svg width="20" height="26" viewBox="0 0 20 26" fill="none"><path d="M6 14C2 9 2 3 9 1" stroke="#d03b15" stroke-width="2.500"/><path d="M14 1C18 5 19 10 15 14" stroke="#d03b15" stroke-width="2.500"/><path d="M9 1H11V13L10 16L9 13Z" fill="#d6d6d6"/><circle cx="5" cy="21" r="3" stroke="#1e7ed8" stroke-width="1.800"/><circle cx="15" cy="21" r="3" stroke="#1e7ed8" stroke-width="1.800"/><path d="M6 19L14 12M14 19L6 12" stroke="#1e7ed8" stroke-width="1.500"/></svg></span>
    <span class="grow"></span>
    <span class="tray"><svg width="12" height="7"><path d="M1 6.500L6 1.500L11 6.500" fill="none" stroke="#fff" stroke-width="1.200"/></svg></span>
    <span class="tray"><svg width="17" height="16" viewBox="0 0 17 16" fill="none" stroke="#fff"><path d="M1 2H6V7M6 3H16V11H1V7H6" /><path d="M8 11V14M4 14.500H12"/></svg></span>
    <span class="tray"><svg width="12" height="18" viewBox="0 0 12 18"><rect x="3" y="0" width="6" height="11" rx="3" fill="#fff"/><path d="M1 7C1 15 11 15 11 7M6 13V17M3 17H9" stroke="#fff" fill="none"/></svg></span>
    <span class="tray"><svg width="16" height="14" viewBox="0 0 16 14" fill="none" stroke="#fff"><path d="M1 5H3L7 2V12L3 9H1Z"/><path d="M9.500 5C10.500 6 10.500 8 9.500 9M12 3C14 5 14 9 12 11"/></svg></span>
    <span class="tray ime">英</span>
    <span class="tray pinyin">拼</span>
    <span class="clock"><b>13:47</b><em>2023/9/2</em></span>
    <span class="tray note"><svg width="16" height="15" viewBox="0 0 16 15"><path d="M0 0H16V11H7L4 15V11H0Z" fill="#fff"/><path d="M3 3.500H13M3 6.500H13" stroke="#203843"/></svg></span>
    <span class="wm">UG爱好者论坛@NX小白白</span>
  </div>

  <aside class="dialog">
    <div class="dtitle">
      <svg width="14" height="14" viewBox="0 0 14 14"><circle cx="7" cy="7" r="3.800" fill="none" stroke="#fff" stroke-width="2.600"/><path d="M7 0V3M7 11V14M0 7H3M11 7H14M2 2L4 4M10 10L12 12M12 2L10 4M4 10L2 12" stroke="#fff" stroke-width="2"/></svg>
      <span class="dname">测量体（即将失效）</span>
      <svg class="dreset" width="13" height="13" viewBox="0 0 13 13"><path d="M4 2A5 5 0 1 0 10 2.500" fill="none" stroke="#fff" stroke-width="1.800"/><path d="M7 0L11 3L7 5Z" fill="#fff"/></svg>
      <svg class="dclose" width="12" height="12"><path d="M1 1L11 11M11 1L1 11" stroke="#fff" stroke-width="2"/></svg>
    </div>
    <div class="dsec s1">
      <div class="dhead"><span>对象</span><svg width="12" height="8"><use href="#chu"/></svg></div>
      <div class="pick">
        <div class="pickmain"><svg width="13" height="13"><use href="#ok"/></svg><span>选择体 (1)</span></div>
        <div class="pickbtn"><svg width="22" height="24" viewBox="0 0 22 24"><defs><linearGradient id="cb1" x1="0" y1="0" x2="1" y2="1"><stop offset="0" stop-color="#ffd84a"/><stop offset="1" stop-color="#f0801c"/></linearGradient></defs><path d="M11 1L21 6V18L11 23L1 18V6Z" fill="url(#cb1)" stroke="#e83c10"/><path d="M1 6L11 11L21 6M11 11V23" fill="none" stroke="#e83c10"/></svg></div>
      </div>
    </div>
    <div class="dsec s2">
      <div class="dhead"><span>关联测量和检查</span><svg width="12" height="8"><use href="#chu"/></svg></div>
      <label class="assoc"><i class="box"></i>关联</label>
      <div class="req"><span>需求</span><span class="reqsel"><span>无</span><svg width="8" height="5" viewBox="0 0 8 5"><path d="M0 0H8L4 5Z" fill="#9a9a9a"/></svg></span></div>
    </div>
    <div class="dmore"><svg width="8" height="5"><use href="#dn"/></svg></div>
    <div class="dbtns"><button class="ok">确定</button><button>应用</button><button>取消</button></div>
  </aside>
</div>
</body>
</html>
```
FILE: styles.css
```css
* { box-sizing: border-box; }
html, body { margin: 0; padding: 0; height: 100%; overflow: hidden; }
body { font-family: "Noto Sans", "Noto Sans CJK SC", sans-serif; font-size: 12px; color: #222; background: #f0f0f0; }
i, em { font-style: normal; }
.defs { position: absolute; }
.grow { flex: 1; }
.app { position: relative; width: 1440px; height: 900px; display: flex; flex-direction: column; overflow: hidden; }

/* title bar */
.titlebar { position: relative; height: 26px; flex: none; display: flex; align-items: center; background: #f0f0f0; padding-right: 1px; }
.qat { width: 833px; flex: none; display: flex; align-items: center; height: 26px; }
.nx { width: 41px; padding-left: 4px; font: bold 24px/26px "Liberation Sans", sans-serif; color: #8197a8; }
.sep { width: 1px; height: 18px; background: #c8c8c8; flex: none; }
.s { display: flex; align-items: center; justify-content: center; flex: none; height: 26px; }
.w12 { width: 12px; } .w22 { width: 22px; } .w24 { width: 24px; } .w25 { width: 25px; } .w26 { width: 26px; } .w28 { width: 28px; } .w31 { width: 31px; }
.qtext { font-size: 11px; flex: none; white-space: nowrap; }
.apptitle { font-size: 13px; line-height: 24px; padding-bottom: 2px; white-space: nowrap; }
.siemens { margin-left: auto; margin-right: 19px; margin-top: 3px; font: bold 12px "Liberation Sans", sans-serif; letter-spacing: .9px; color: #079a92; }
.winbtn { width: 24px; height: 26px; display: flex; align-items: center; justify-content: center; }
.progress { position: absolute; left: 600px; top: 0; width: 48px; height: 1px; background: #0a78d8; box-shadow: 48px 0 0 #e6e6e6, 96px 0 0 #e6e6e6, 144px 0 0 #e6e6e6, 192px 0 0 #e6e6e6; }

/* ribbon tabs */
.tabbar { height: 30px; flex: none; display: flex; align-items: center; background: #bababa; padding-right: 4px; }
.tab { height: 30px; padding: 0 13px; line-height: 29px; font-size: 13px; color: #222; white-space: nowrap; flex: none; }
.tab.file { width: 81px; padding: 0; text-align: center; background: #55a0bc; color: #fff; font-size: 13px; }
.tab.first { margin-left: 2px; }
.tab.active { background: #f0f0f0; color: #0b7aa6; }
.search { width: 124px; height: 19px; background: #fff; border: 1px solid #a8a8a8; display: flex; align-items: center; justify-content: space-between; padding: 0 1px; color: #a8a8a8; font-size: 11px; }
.tabicon { width: 34px; height: 30px; display: flex; align-items: center; justify-content: center; }
.search + .tabicon { margin-left: 7px; }
.help { font: bold 15px "Liberation Sans", sans-serif; fill: #fff; text-anchor: middle; }

/* ribbon */
.ribbon { position: relative; height: 94px; flex: none; display: flex; background: #f0f0f0; border-bottom: 1px solid #aeaeae; padding-top: 4px; }
.rgroup { display: flex; flex-direction: column; height: 84px; border-right: 1px solid #c9c9c9; flex: none; position: relative; }
.g1 { width: 99px; } .g2 { width: 277px; padding-left: 8px; } .g3 { width: 55px; } .g4 { width: 43px; padding-left: 2px; }
.rbody { display: flex; flex: none; height: 66px; }
.ritem { display: flex; flex-direction: column; align-items: center; font-size: 11px; line-height: 14px; flex: none; }
.ritem > span { margin-top: 2px; white-space: nowrap; }
.w56 { width: 56px; } .w38 { width: 38px; } .w52 { width: 52px; } .w54 { width: 54px; }
.ric { height: 36px; width: 100%; display: flex; align-items: center; justify-content: center; margin-top: 0; }
.boxed { border: 1px solid #c8c8c8; border-radius: 4px; }
.car { margin-top: 5px; }
.rlist { list-style: none; margin: -3px 0 0 7px; padding: 0; font-size: 11px; }
.rlist li { height: 22px; display: flex; align-items: center; gap: 4px; white-space: nowrap; }
.rlabel { margin-top: auto; height: 18px; position: relative; font-size: 11px; color: #0b7aa6; padding-left: 30px; line-height: 28px; }
.g2 .rlabel { padding-left: 0; text-align: center; padding-right: 26px; }
.g3 .rlabel { padding-left: 2px; }
.lcar { position: absolute; right: 8px; top: 11px; }
.tcar { position: absolute; right: 5px; top: 81px; }

/* toolbar */
.toolbar { position: relative; height: 47px; flex: none; display: flex; align-items: center; background: #f0f0f0; border-bottom: 1px solid #9a9a9a; padding-top: 1px; }
.menu { width: 86px; padding-left: 10px; display: flex; align-items: center; gap: 2px; font-size: 11px; white-space: nowrap; flex: none; }
.mcar { margin-left: 3px; }
.tsep { width: 1px; height: 36px; background: #c8c8c8; margin-right: 12px; flex: none; }
.sel { height: 20px; background: #fff; border: 1px solid #a8a8a8; display: flex; align-items: center; justify-content: space-between; padding: 0 4px 0 2px; font-size: 11px; flex: none; }
.w133 { width: 133px; margin-right: 9px; } .w139 { width: 139px; margin-right: 5px; } .w140 { width: 140px; }
.ml5 { margin-left: 5px; } .ml4 { margin-left: 4px; }
.ti { display: flex; align-items: center; justify-content: center; height: 24px; flex: none; }
.t12 { width: 12px; } .t14 { width: 14px; } .t22 { width: 22px; } .t23 { width: 23px; } .t25 { width: 25px; } .t26 { width: 26px; }
.tcar2 { position: absolute; right: 5px; top: 36px; }

/* workspace */
.workspace { flex: 1; display: flex; min-height: 0; }
.rail { width: 33px; flex: none; background: #bababa; border-right: 1px solid #a4a4a4; display: flex; flex-direction: column; }
.ra { height: 42px; display: flex; align-items: center; justify-content: center; flex: none; }
.gear { height: 28px; margin-bottom: 14px; background: #bababa; }
.ra.on { background: #f0f0f0; margin: -2px -1px 0 2px; height: 45px; }
.ra.big { height: 53px; }
.ra.first { margin-top: 7px; }
.ra.tight { margin-top: -4px; }
.nav { width: 330px; flex: none; background: #f0f0f0; display: flex; flex-direction: column; padding-left: 5px; border-right: 1px solid #9a9a9a; }
.navhead { height: 30px; flex: none; display: flex; align-items: center; padding-left: 4px; padding-right: 5px; justify-content: space-between; font-size: 12px; }
.maxbox { width: 12px; height: 11px; border: 1.500px solid #222; }
.tree { height: 527px; flex: none; border: 1px solid #b4b4b4; width: 315px; display: flex; flex-direction: column; background: #fafafa; padding: 0 1px; }
.thead { display: flex; height: 21px; flex: none; background: #f0f0f0; border-bottom: 1px solid #ddd; line-height: 21px; padding-top: 1px; }
.thead .c1 { gap: 17px; padding-left: 6px; }
.c1 { width: 200px; flex: none; display: flex; align-items: center; border-right: 2px solid #e6e6e6; height: 100%; white-space: nowrap; }
.c2 { width: 100px; flex: none; border-right: 2px solid #e6e6e6; height: 100%; display: flex; align-items: center; padding-left: 6px; }
.c3 { flex: 1; overflow: hidden; height: 100%; }
.tbody { flex: 1; overflow: hidden; position: relative; min-height: 0; }
.row { display: flex; height: 20px; border-bottom: 1px solid #e6e6e6; }
.row:nth-child(even) { background: #f3f3f3; }
.exp { width: 8px; height: 8px; margin-left: 5px; border: 1px solid #bbb; background: #fff; font-size: 9px; line-height: 6px; text-align: center; color: #111; flex: none; position: relative; z-index: 1; }
.ic1 { margin-left: 5px; flex: none; }
.ic2 { margin-left: 3px; flex: none; }
.okr { margin-left: 8px; flex: none; }
.t { margin-left: 4px; line-height: 18px; }
.ch { padding-left: 29px; }
.dots { width: 10px; border-top: 1px dotted #888; flex: none; }
.ci { margin-left: 3px; flex: none; }
.ch .t { margin-left: 4px; }
.red { color: #f25555; }
.strong { color: #ef2f2f; font-weight: 500; }
.vdot { position: absolute; border-left: 1px dotted #888; }
.vd1 { left: 8px; top: 14px; height: 28px; }
.vd2 { left: 27px; top: 54px; height: 176px; }
.hscroll { height: 17px; flex: none; display: flex; align-items: center; justify-content: space-between; padding: 0 6px 0 5px; background: #f6f6f6; position: relative; }
.thumb { position: absolute; left: 16px; width: 216px; top: 1px; height: 15px; background: #c8c8c8; }
.splitter { height: 5px; width: 316px; flex: none; background: #b8b8b8; }
.acc { height: 24px; width: 316px; flex: none; display: flex; align-items: flex-end; justify-content: space-between; padding: 0 5px 0 7px; border-bottom: 2px solid #d2d2d2; font-size: 14px; line-height: 16px; color: #0e7ea2; }
.acc svg { margin-bottom: 5px; }
.view { flex: 1; min-width: 0; display: flex; flex-direction: column; }
.viewtabs { height: 24px; flex: none; background: #f0f0f0; border-bottom: 2px solid #55a0bc; }
.vtab { width: 120px; height: 22px; background: #55a0bc; color: #fff; display: flex; align-items: center; padding-left: 8px; gap: 5px; font-size: 12px; }
.vtab span { color: #e8f2f6; }
.vx { margin-left: 6px; }
.canvas { flex: 1; position: relative; background: linear-gradient(#b5b6b8, #cdced0 30%, #e2e3e5 75%, #e9eaec); overflow: hidden; }
.model { position: absolute; left: 0; top: 0; width: 1077px; height: 616px; display: block; }
.m { font-family: "Liberation Sans", sans-serif; font-size: 34px; }
.yp { fill: #54a04c; } .xp { fill: #a83a3a; } .zp { fill: #5a70ee; } .z { fill: #2222d8; } .gx { fill: #b4b4b4; }
.measure { position: absolute; left: 359px; top: 261px; width: 212px; height: 31px; background: #f0f0f0; border: 1px solid #a8a8a8; display: flex; align-items: center; }
.grip { width: 6px; height: 24px; margin-left: 3px; background-image: radial-gradient(#aaa 1px, transparent 1.200px); background-size: 3px 3px; flex: none; }
.msel { width: 75px; height: 24px; margin-left: 8px; background: #fff; border: 1px solid #a0a0a0; display: flex; align-items: center; justify-content: space-between; padding: 0 5px 0 4px; flex: none; }
.mval { margin-left: 3px; white-space: nowrap; font-size: 12px; letter-spacing: .3px; padding-bottom: 2px; }
.triad { position: absolute; left: 10px; top: 530px; }
.tx { font: 15px "Liberation Sans", sans-serif; }
.rx { fill: #d06060; } .bx { fill: #3a5ae8; } .gx2 { fill: #5aa05a; }

/* status + taskbar */
.status { height: 22px; flex: none; background: #f0f0f0; border-top: 1px solid #a8a8a8; display: flex; align-items: center; font-size: 11px; position: relative; padding-bottom: 3px; }
.st-left { margin-left: 3px; }
.st-mid { position: absolute; left: 666px; }
.st-ic { margin-left: 5px; width: 16px; display: flex; align-items: center; justify-content: center; }
.flag { margin-left: auto; margin-right: 0; }
.st-ic:last-child { margin-right: 55px; }
.taskbar { height: 40px; flex: none; background: #203843; display: flex; align-items: center; position: relative; color: #fff; padding-right: 14px; }
.tk { height: 40px; display: flex; align-items: center; justify-content: center; flex: none; position: relative; }
.w48 { width: 48px; } .w49 { width: 49px; }
.third { margin-left: 2px; }
.run::after, .act::after { content: ""; position: absolute; left: 4px; right: 4px; bottom: 0; height: 2px; background: #7cbcec; }
.act { background: #4c626c; }
.act::after { left: 0; right: 0; }
.tray { width: 24px; height: 40px; display: flex; align-items: center; justify-content: center; flex: none; }
.ime { font-size: 14px; }
.pinyin { margin: 0 2px 0 5px; color: #111; font-size: 12px; background: linear-gradient(#fff, #fff) center/15px 15px no-repeat; }
.clock { width: 80px; text-align: center; display: flex; flex-direction: column; line-height: 17px; font-size: 12px; flex: none; }
.clock b { font-weight: 400; }
.clock em { color: #c8d0d4; }
.note { width: 36px; }
.wm { position: absolute; left: 1270px; top: 18px; font: 14px "Liberation Serif", "Noto Sans CJK SC", serif; letter-spacing: .4px; color: rgba(255,255,255,.55); white-space: nowrap; }

/* dialog */
.dialog { position: absolute; left: 1095px; top: 101px; width: 328px; height: 250px; background: #dcdcdc; border: 1px solid #a4a4a4; border-top: 0; z-index: 5; }
.dtitle { height: 24px; background: #559fba; display: flex; align-items: center; padding: 0 10px 0 7px; margin: 0 -1px; color: #fff; }
.dname { margin-left: 7px; font-size: 14px; flex: 1; line-height: 22px; padding-bottom: 1px; }
.dclose { margin-left: 7px; }
.dsec { margin: 4px 5px 0; background: #f0f0f0; border-bottom: 1px solid #9f9f9f; padding: 0 5px 0 7px; }
.s1 { height: 71px; }
.s2 { height: 86px; }
.dhead { height: 26px; display: flex; align-items: center; justify-content: space-between; font-size: 14px; color: #0b6f92; padding-bottom: 2px; }
.pick { display: flex; gap: 2px; margin-left: 2px; margin-top: 4px; }
.pickmain { width: 264px; height: 32px; background: #ffdf78; display: flex; align-items: center; padding-left: 2px; gap: 5px; font-size: 12px; }
.pickbtn { width: 32px; height: 32px; background: #ffdf78; display: flex; align-items: center; justify-content: center; }
.assoc { display: flex; align-items: center; gap: 5px; height: 20px; margin: 3px 0 0 2px; font-size: 12px; }
.box { width: 13px; height: 13px; border: 1.500px solid #222; background: #fff; }
.req { display: flex; align-items: center; justify-content: space-between; margin: 2px 4px 0 2px; color: #8a8a8a; font-size: 12px; }
.reqsel { width: 141px; height: 25px; background: #fff; border: 1px solid #b8b8b8; display: flex; align-items: center; justify-content: space-between; padding: 0 5px 0 4px; }
.dmore { height: 15px; margin: 1px 5px 0; display: flex; align-items: center; justify-content: center; border-bottom: 1px solid #e6e6e6; }
.dbtns { display: flex; justify-content: flex-end; gap: 5px; padding: 9px 15px 0 0; }
.dbtns button { width: 54px; height: 25px; background: #e0e0e0; border: 1px solid #8c8c8c; font: 12px "Noto Sans", "Noto Sans CJK SC", sans-serif; color: #222; padding: 0; }
.dbtns .ok { background: #70b3ca; border-color: #70b3ca; color: #fff; }
.info { font: bold 13px "Liberation Serif", serif; fill: #fff; text-anchor: middle; }
```
